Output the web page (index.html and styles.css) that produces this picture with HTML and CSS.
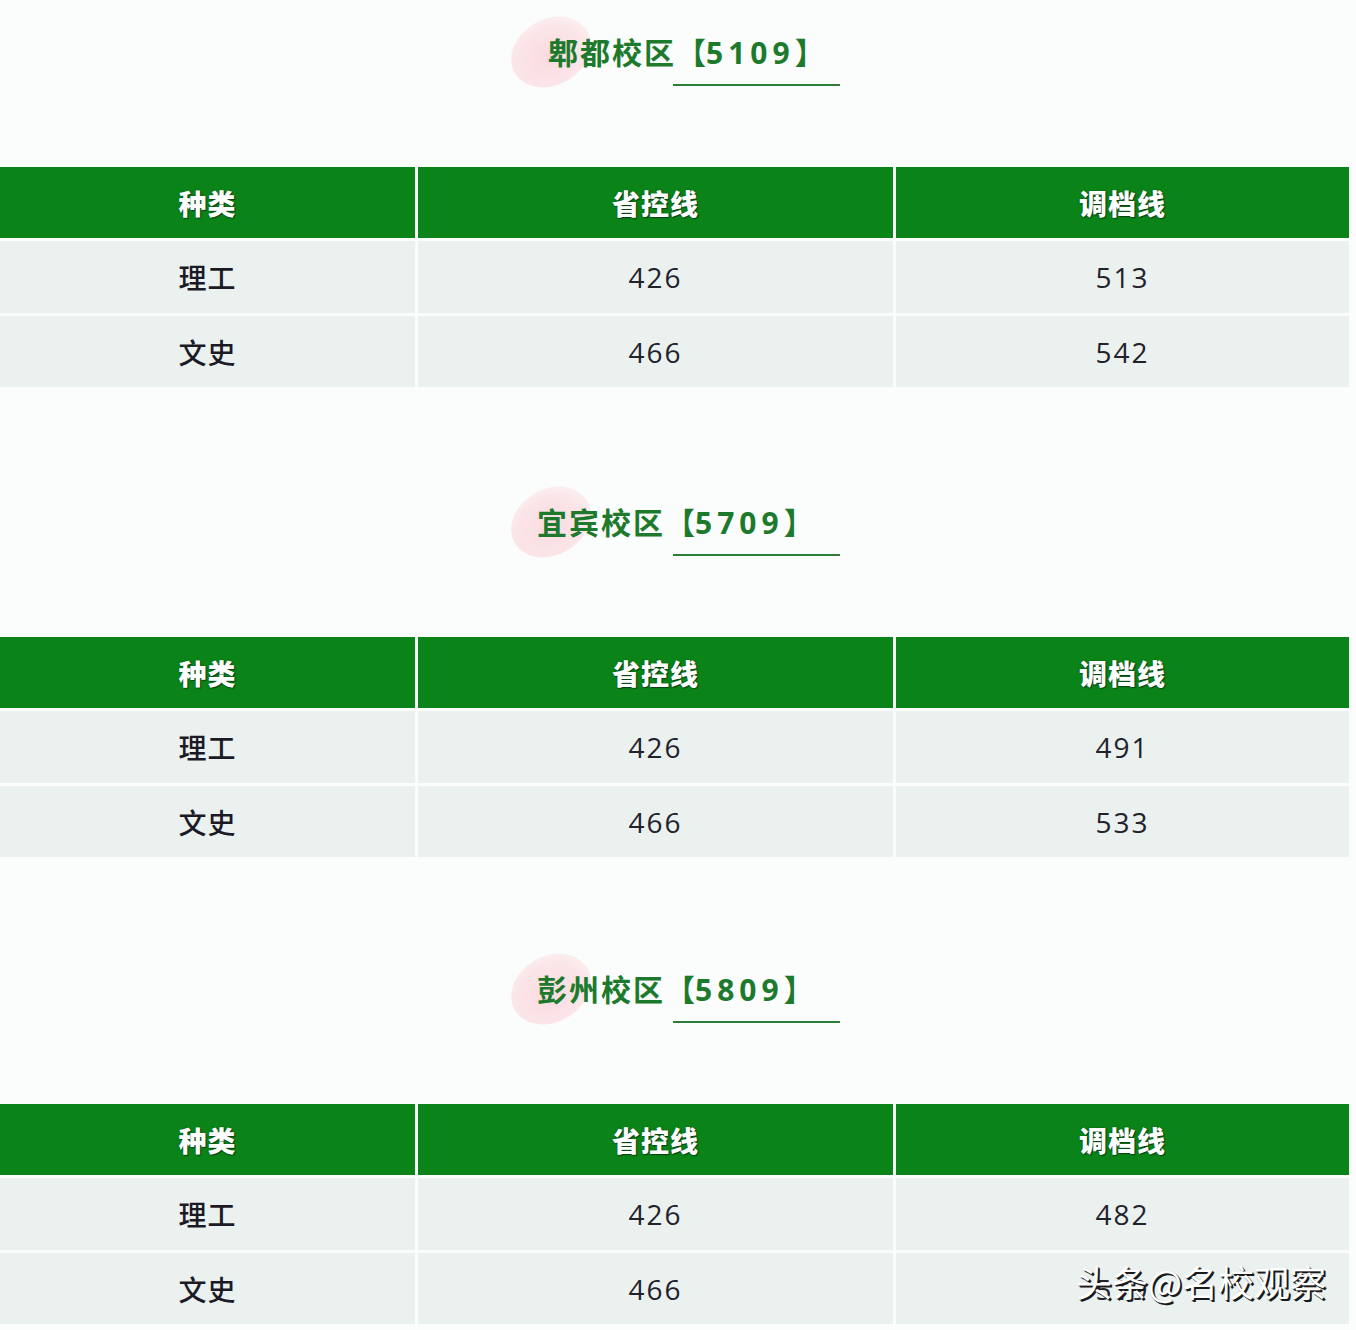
FILE: index.html
```html
<!DOCTYPE html>
<html lang="zh">
<head>
<meta charset="utf-8">
<link rel="stylesheet" href="styles.css">
</head>
<body>
<div class="page">
  <section class="section first">
    <div class="title title-a">
      <span class="blob"></span>
      <h2 class="title-text">郫都校区<span class="br">【</span><span class="code">5109</span><span class="br">】</span></h2>
      <span class="rule"></span>
    </div>
    <div class="table">
      <div class="th">种类</div><div class="th">省控线</div><div class="th">调档线</div>
      <div class="td cn">理工</div><div class="td num">426</div><div class="td num">513</div>
      <div class="td cn">文史</div><div class="td num">466</div><div class="td num">542</div>
    </div>
  </section>
  <section class="section">
    <div class="title">
      <span class="blob"></span>
      <h2 class="title-text">宜宾校区<span class="br">【</span><span class="code">5709</span><span class="br">】</span></h2>
      <span class="rule"></span>
    </div>
    <div class="table">
      <div class="th">种类</div><div class="th">省控线</div><div class="th">调档线</div>
      <div class="td cn">理工</div><div class="td num">426</div><div class="td num">491</div>
      <div class="td cn">文史</div><div class="td num">466</div><div class="td num">533</div>
    </div>
  </section>
  <section class="section last">
    <div class="title">
      <span class="blob"></span>
      <h2 class="title-text">彭州校区<span class="br">【</span><span class="code">5809</span><span class="br">】</span></h2>
      <span class="rule"></span>
    </div>
    <div class="table">
      <div class="th">种类</div><div class="th">省控线</div><div class="th">调档线</div>
      <div class="td cn">理工</div><div class="td num">426</div><div class="td num">482</div>
      <div class="td cn">文史</div><div class="td num">466</div><div class="td num hidden-num">519</div>
    </div>
  </section>
  <div class="watermark">头条@名校观察</div>
</div>
</body>
</html>
```
FILE: styles.css
```css
html, body {
  margin: 0;
  padding: 0;
  background: #fbfcfc;
}
.page {
  position: relative;
  width: 1356px;
  height: 1330px;
  overflow: hidden;
  font-family: "Noto Sans CJK SC", "Noto Sans", sans-serif;
}
.section {
  padding-top: 110px;
}
.section.first {
  padding-top: 27px;
}
.section.last {
  padding-top: 107px;
}
.title {
  position: relative;
  width: 340px;
  margin: 0 auto;
  padding-left: 29px;
  box-sizing: border-box;
}
.title-a {
  padding-left: 40px;
}
.blob {
  position: absolute;
  left: 1px;
  top: -8px;
  width: 84px;
  height: 66px;
  border-radius: 50%;
  background: radial-gradient(ellipse at 45% 55%, #f9dbe0 0%, #fbe5e8 55%, rgba(252,236,238,0.6) 82%, rgba(252,240,242,0) 100%);
  transform: rotate(-30deg);
}
.title-text {
  position: relative;
  margin: 0;
  height: 48px;
  line-height: 48px;
  font-size: 30px;
  font-weight: 700;
  letter-spacing: 2px;
  color: #1d7a2c;
  white-space: nowrap;
}
.br {
  letter-spacing: 0;
}
.code {
  letter-spacing: 5px;
  font-family: "Noto Sans", "DejaVu Sans", sans-serif;
  font-weight: 700;
  font-size: 30px;
}
.rule {
  display: block;
  margin: 9px 0 0 136px;
  width: 167px;
  height: 2px;
  background: #2b7f37;
}
.title-a .rule {
  margin-left: 125px;
}
.table {
  margin-top: 81px;
  display: grid;
  grid-template-columns: 415px 475px 453px;
  grid-template-rows: 71px 72px 71px;
  column-gap: 3px;
  row-gap: 3px;
}
.th {
  background: #0a8418;
  color: #ffffff;
  font-size: 28px;
  font-weight: 900;
  display: flex;
  align-items: center;
  justify-content: center;
  text-shadow: 1px 1px 1px #0b3f12, 0 0 2px rgba(0,50,10,0.6);
  letter-spacing: 1px;
}
.td {
  background: #ebf1ef;
  display: flex;
  align-items: center;
  justify-content: center;
  color: #1b1a26;
}
.td.cn {
  font-size: 28px;
  font-weight: 500;
  letter-spacing: 1px;
}
.td.num {
  font-family: "Open Sans", "Noto Sans", sans-serif;
  font-size: 28px;
  letter-spacing: 2px;
  color: #23222c;
}
.watermark {
  position: absolute;
  right: 30px;
  top: 1257px;
  font-size: 36px;
  line-height: 48px;
  color: #ffffff;
  font-weight: 400;
  text-shadow: 2px 2px 0 #1a1a1a, 1px 1px 1px #333333;
}
```
